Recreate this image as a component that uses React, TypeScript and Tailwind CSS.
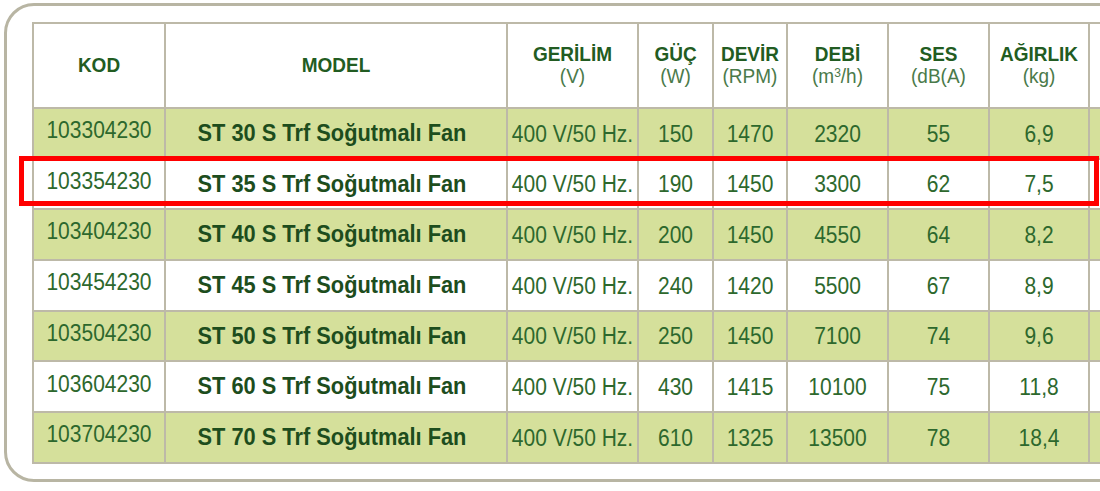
import React from "react";

const rows = [
  ["103304230", "ST 30 S Trf Soğutmalı Fan", "400 V/50 Hz.", "150", "1470", "2320", "55", "6,9"],
  ["103354230", "ST 35 S Trf Soğutmalı Fan", "400 V/50 Hz.", "190", "1450", "3300", "62", "7,5"],
  ["103404230", "ST 40 S Trf Soğutmalı Fan", "400 V/50 Hz.", "200", "1450", "4550", "64", "8,2"],
  ["103454230", "ST 45 S Trf Soğutmalı Fan", "400 V/50 Hz.", "240", "1420", "5500", "67", "8,9"],
  ["103504230", "ST 50 S Trf Soğutmalı Fan", "400 V/50 Hz.", "250", "1450", "7100", "74", "9,6"],
  ["103604230", "ST 60 S Trf Soğutmalı Fan", "400 V/50 Hz.", "430", "1415", "10100", "75", "11,8"],
  ["103704230", "ST 70 S Trf Soğutmalı Fan", "400 V/50 Hz.", "610", "1325", "13500", "78", "18,4"],
];

function H({ title, sub }: { title: string; sub?: React.ReactNode }) {
  return (
    <div className="bg-white flex flex-col items-center justify-center text-center leading-[22px]">
      <span className="inline-block scale-y-[1.08] text-[19px] font-bold text-[#225c22]">{title}</span>
      {sub && <span className="inline-block scale-y-[1.08] text-[19px] text-[#4a7a4a]">{sub}</span>}
    </div>
  );
}

export default function App() {
  return (
    <div
      className="relative w-[1100px] h-[491px] overflow-hidden bg-white"
      style={{ fontFamily: '"Liberation Sans", Arial, sans-serif' }}
    >
      <div className="ml-[4px] mt-[3px] w-[1300px] h-[479px] rounded-[30px] border-[3px] border-[#b8b5a3] pl-[25px] pt-[16px]">
        <div className="grid w-[1200px] bg-[#bdb9a8] p-[2px] gap-[2px] grid-cols-[130px_340px_129px_73px_72px_99px_99px_98px_200px] grid-rows-[83px_repeat(7,48.7px)]">
          <H title="KOD" />
          <H title="MODEL" />
          <H title="GERİLİM" sub="(V)" />
          <H title="GÜÇ" sub="(W)" />
          <H title="DEVİR" sub="(RPM)" />
          <H
            title="DEBİ"
            sub={
              <>
                (m<span className="relative -top-[6px] text-[12px] leading-none">3</span>/h)
              </>
            }
          />
          <H title="SES" sub="(dB(A)" />
          <H title="AĞIRLIK" sub="(kg)" />
          <div className="bg-white" />
          {rows.map((r, i) => {
            const bg = i % 2 === 0 ? "bg-[#d5e09b]" : "bg-white";
            return (
              <React.Fragment key={r[0]}>
                <div className={`${bg} flex items-center justify-center pb-[7px] text-[21px] text-[#2d682d]`}>
                  <span className="inline-block scale-y-[1.1]">{r[0]}</span>
                </div>
                <div className={`${bg} flex items-center justify-center pr-[8px] text-[21.8px] font-bold text-[#1d4d1d]`}>
                  <span className="inline-block scale-y-[1.1]">{r[1]}</span>
                </div>
                {r.slice(2).map((v, j) => (
                  <div
                    key={j}
                    className={`${bg} flex items-center justify-center text-[21px] text-[#2d682d] whitespace-nowrap`}
                  >
                    <span className="inline-block scale-y-[1.1]">{v}</span>
                  </div>
                ))}
                <div className={bg} />
              </React.Fragment>
            );
          })}
        </div>
      </div>
      <div className="absolute left-[19px] top-[156px] w-[1080px] h-[50px] border-[5px] border-[#ff0000]" />
    </div>
  );
}
